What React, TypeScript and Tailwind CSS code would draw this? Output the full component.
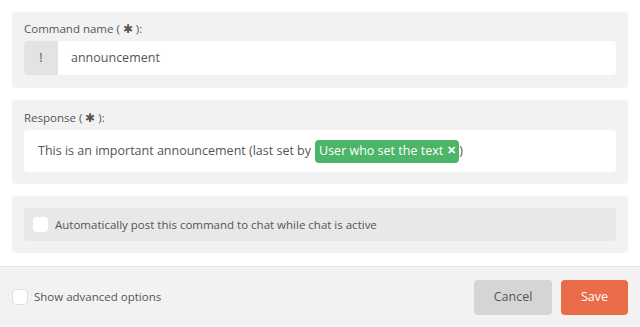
export default function App() {
  return (
    <div className="flex h-[327px] w-[640px] flex-col bg-white text-[#555] [font-family:'Open_Sans',sans-serif]">
      <main className="flex flex-1 flex-col gap-3 p-3">
        <section className="rounded bg-[#f2f2f2] px-3 pb-[13px] pt-[10px]">
          <label className="mb-[5px] block text-[11.5px] leading-[14px]">Command name ( ✱ ):</label>
          <div className="flex h-[34px] rounded-sm bg-white">
            <span className="flex w-[34px] items-center justify-center rounded-l-sm bg-[#e3e3e3] text-[12.5px]">!</span>
            <span className="flex items-center pl-[13px] text-[12.5px]">announcement</span>
          </div>
        </section>

        <section className="rounded bg-[#f2f2f2] px-3 pb-3 pt-[11px]">
          <label className="mb-[5px] block text-[11.5px] leading-[14px]">Response ( ✱ ):</label>
          <div className="flex h-[42px] items-center rounded-sm bg-white pl-[14px] text-[12.5px]">
            <span>This is an important announcement (last set by</span>
            <span className="ml-[4px] flex h-[23px] items-center gap-[4px] rounded-sm bg-[#4cb567] pl-[4px] pr-[3px] text-white">
              User who set the text
              <span className="text-[10.5px] font-bold">✕</span>
            </span>
            <span>)</span>
          </div>
        </section>

        <section className="rounded bg-[#f2f2f2] p-3">
          <label className="flex h-[33px] items-center gap-[7px] rounded bg-[#e8e8e8] pl-[9px] text-[11.5px]">
            <span className="h-[15px] w-[15px] rounded-sm bg-white" />
            Automatically post this command to chat while chat is active
          </label>
        </section>
      </main>

      <footer className="flex h-[61px] items-center border-t border-[#e6e6e6] bg-[#f2f2f2] pl-3 pr-3">
        <label className="flex items-center gap-[6px] text-[11.5px]">
          <span className="h-4 w-4 rounded-sm border border-[#e0e0e0] bg-white" />
          Show advanced options
        </label>
        <div className="ml-auto flex gap-[9px]">
          <button className="h-[35px] w-[78px] rounded bg-[#d5d5d5] text-[12.5px] text-[#555]">Cancel</button>
          <button className="h-[35px] w-[67px] rounded bg-[#ea6b48] text-[12.5px] text-white">Save</button>
        </div>
      </footer>
    </div>
  );
}
